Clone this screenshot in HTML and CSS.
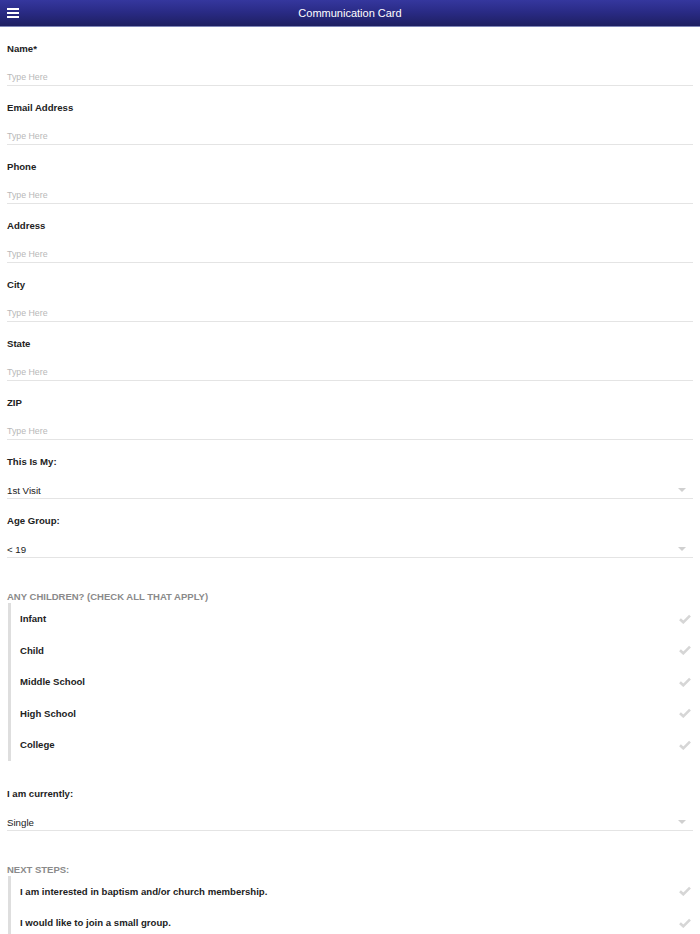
FILE: index.html
```html
<!DOCTYPE html>
<html>
<head>
<meta charset="utf-8">
<link rel="stylesheet" href="styles.css">
</head>
<body>
<header class="topbar">
  <span class="menu"><span></span><span></span><span></span></span>
  <h1 class="title">Communication Card</h1>
</header>
<main class="form">
  <div class="field"><div class="label">Name*</div><div class="input placeholder">Type Here</div></div>
  <div class="field"><div class="label">Email Address</div><div class="input placeholder">Type Here</div></div>
  <div class="field"><div class="label">Phone</div><div class="input placeholder">Type Here</div></div>
  <div class="field"><div class="label">Address</div><div class="input placeholder">Type Here</div></div>
  <div class="field"><div class="label">City</div><div class="input placeholder">Type Here</div></div>
  <div class="field"><div class="label">State</div><div class="input placeholder">Type Here</div></div>
  <div class="field"><div class="label">ZIP</div><div class="input placeholder">Type Here</div></div>
  <div class="field"><div class="label">This Is My:</div><div class="input select">1st Visit<span class="caret"></span></div></div>
  <div class="field"><div class="label">Age Group:</div><div class="input select">&lt; 19<span class="caret"></span></div></div>

  <div class="section">
    <div class="section-title">ANY CHILDREN? (CHECK ALL THAT APPLY)</div>
    <ul class="checklist">
      <li class="check-item"><span>Infant</span><svg class="tick" viewBox="0 0 12 10"><path d="M1 5.2 L4.3 8.3 L11 1.6" /></svg></li>
      <li class="check-item"><span>Child</span><svg class="tick" viewBox="0 0 12 10"><path d="M1 5.2 L4.3 8.3 L11 1.6" /></svg></li>
      <li class="check-item"><span>Middle School</span><svg class="tick" viewBox="0 0 12 10"><path d="M1 5.2 L4.3 8.3 L11 1.6" /></svg></li>
      <li class="check-item"><span>High School</span><svg class="tick" viewBox="0 0 12 10"><path d="M1 5.2 L4.3 8.3 L11 1.6" /></svg></li>
      <li class="check-item"><span>College</span><svg class="tick" viewBox="0 0 12 10"><path d="M1 5.2 L4.3 8.3 L11 1.6" /></svg></li>
    </ul>
  </div>

  <div class="field field-after"><div class="label">I am currently:</div><div class="input select">Single<span class="caret"></span></div></div>

  <div class="section">
    <div class="section-title">NEXT STEPS:</div>
    <ul class="checklist">
      <li class="check-item"><span>I am interested in baptism and/or church membership.</span><svg class="tick" viewBox="0 0 12 10"><path d="M1 5.2 L4.3 8.3 L11 1.6" /></svg></li>
      <li class="check-item"><span>I would like to join a small group.</span><svg class="tick" viewBox="0 0 12 10"><path d="M1 5.2 L4.3 8.3 L11 1.6" /></svg></li>
    </ul>
  </div>
</main>
</body>
</html>
```

FILE: styles.css
```css
html, body {
  margin: 0;
  padding: 0;
  background: #ffffff;
  font-family: "Liberation Sans", Arial, Helvetica, sans-serif;
  color: #222222;
  overflow: hidden;
}

.topbar {
  height: 26px;
  background: linear-gradient(to bottom, #35379e 0%, #2a2b86 45%, #1e1f62 100%);
  border-bottom: 1px solid #7f86b8;
  display: flex;
  align-items: center;
  justify-content: center;
  position: relative;
}

.menu {
  position: absolute;
  left: 7px;
  top: 8px;
  width: 12px;
  display: flex;
  flex-direction: column;
  gap: 2px;
}

.menu span {
  display: block;
  height: 2px;
  background: #ffffff;
}

.title {
  margin: 0;
  font-size: 11px;
  font-weight: normal;
  color: #ffffff;
  line-height: 26px;
}

.form {
  padding: 15px 7px 0 7px;
}

.field {
  margin-bottom: 15px;
}

.label {
  font-size: 9.6px;
  font-weight: bold;
  line-height: 14px;
  color: #222222;
  margin-bottom: 14px;
}

.input {
  font-size: 9.7px;
  line-height: 15px;
  height: 15px;
  border-bottom: 1px solid #e4e4e4;
  position: relative;
}

.placeholder {
  color: #b8b8b8;
  font-size: 8.8px;
}

.select {
  color: #222222;
}

.caret {
  position: absolute;
  right: 7px;
  top: 5px;
  width: 0;
  height: 0;
  border-left: 4.5px solid transparent;
  border-right: 4.5px solid transparent;
  border-top: 4px solid #d0d0d0;
}

.section {
  margin-top: 33px;
}

.section-title {
  font-size: 9.5px;
  font-weight: bold;
  color: #8a8a8a;
  line-height: 12px;
  margin-bottom: 0;
}

.checklist {
  list-style: none;
  margin: 0;
  padding: 0;
  border-left: 3px solid #dedede;
  margin-left: 1px;
}

.check-item {
  display: flex;
  align-items: center;
  justify-content: space-between;
  height: 31.5px;
  padding-left: 9px;
  font-size: 9.6px;
  font-weight: bold;
  color: #222222;
}

.tick {
  width: 12px;
  height: 10px;
  margin-right: 2px;
  fill: none;
  stroke: #d6d6d6;
  stroke-width: 2.6;
}

.field-after {
  margin-top: 26px;
}
```
